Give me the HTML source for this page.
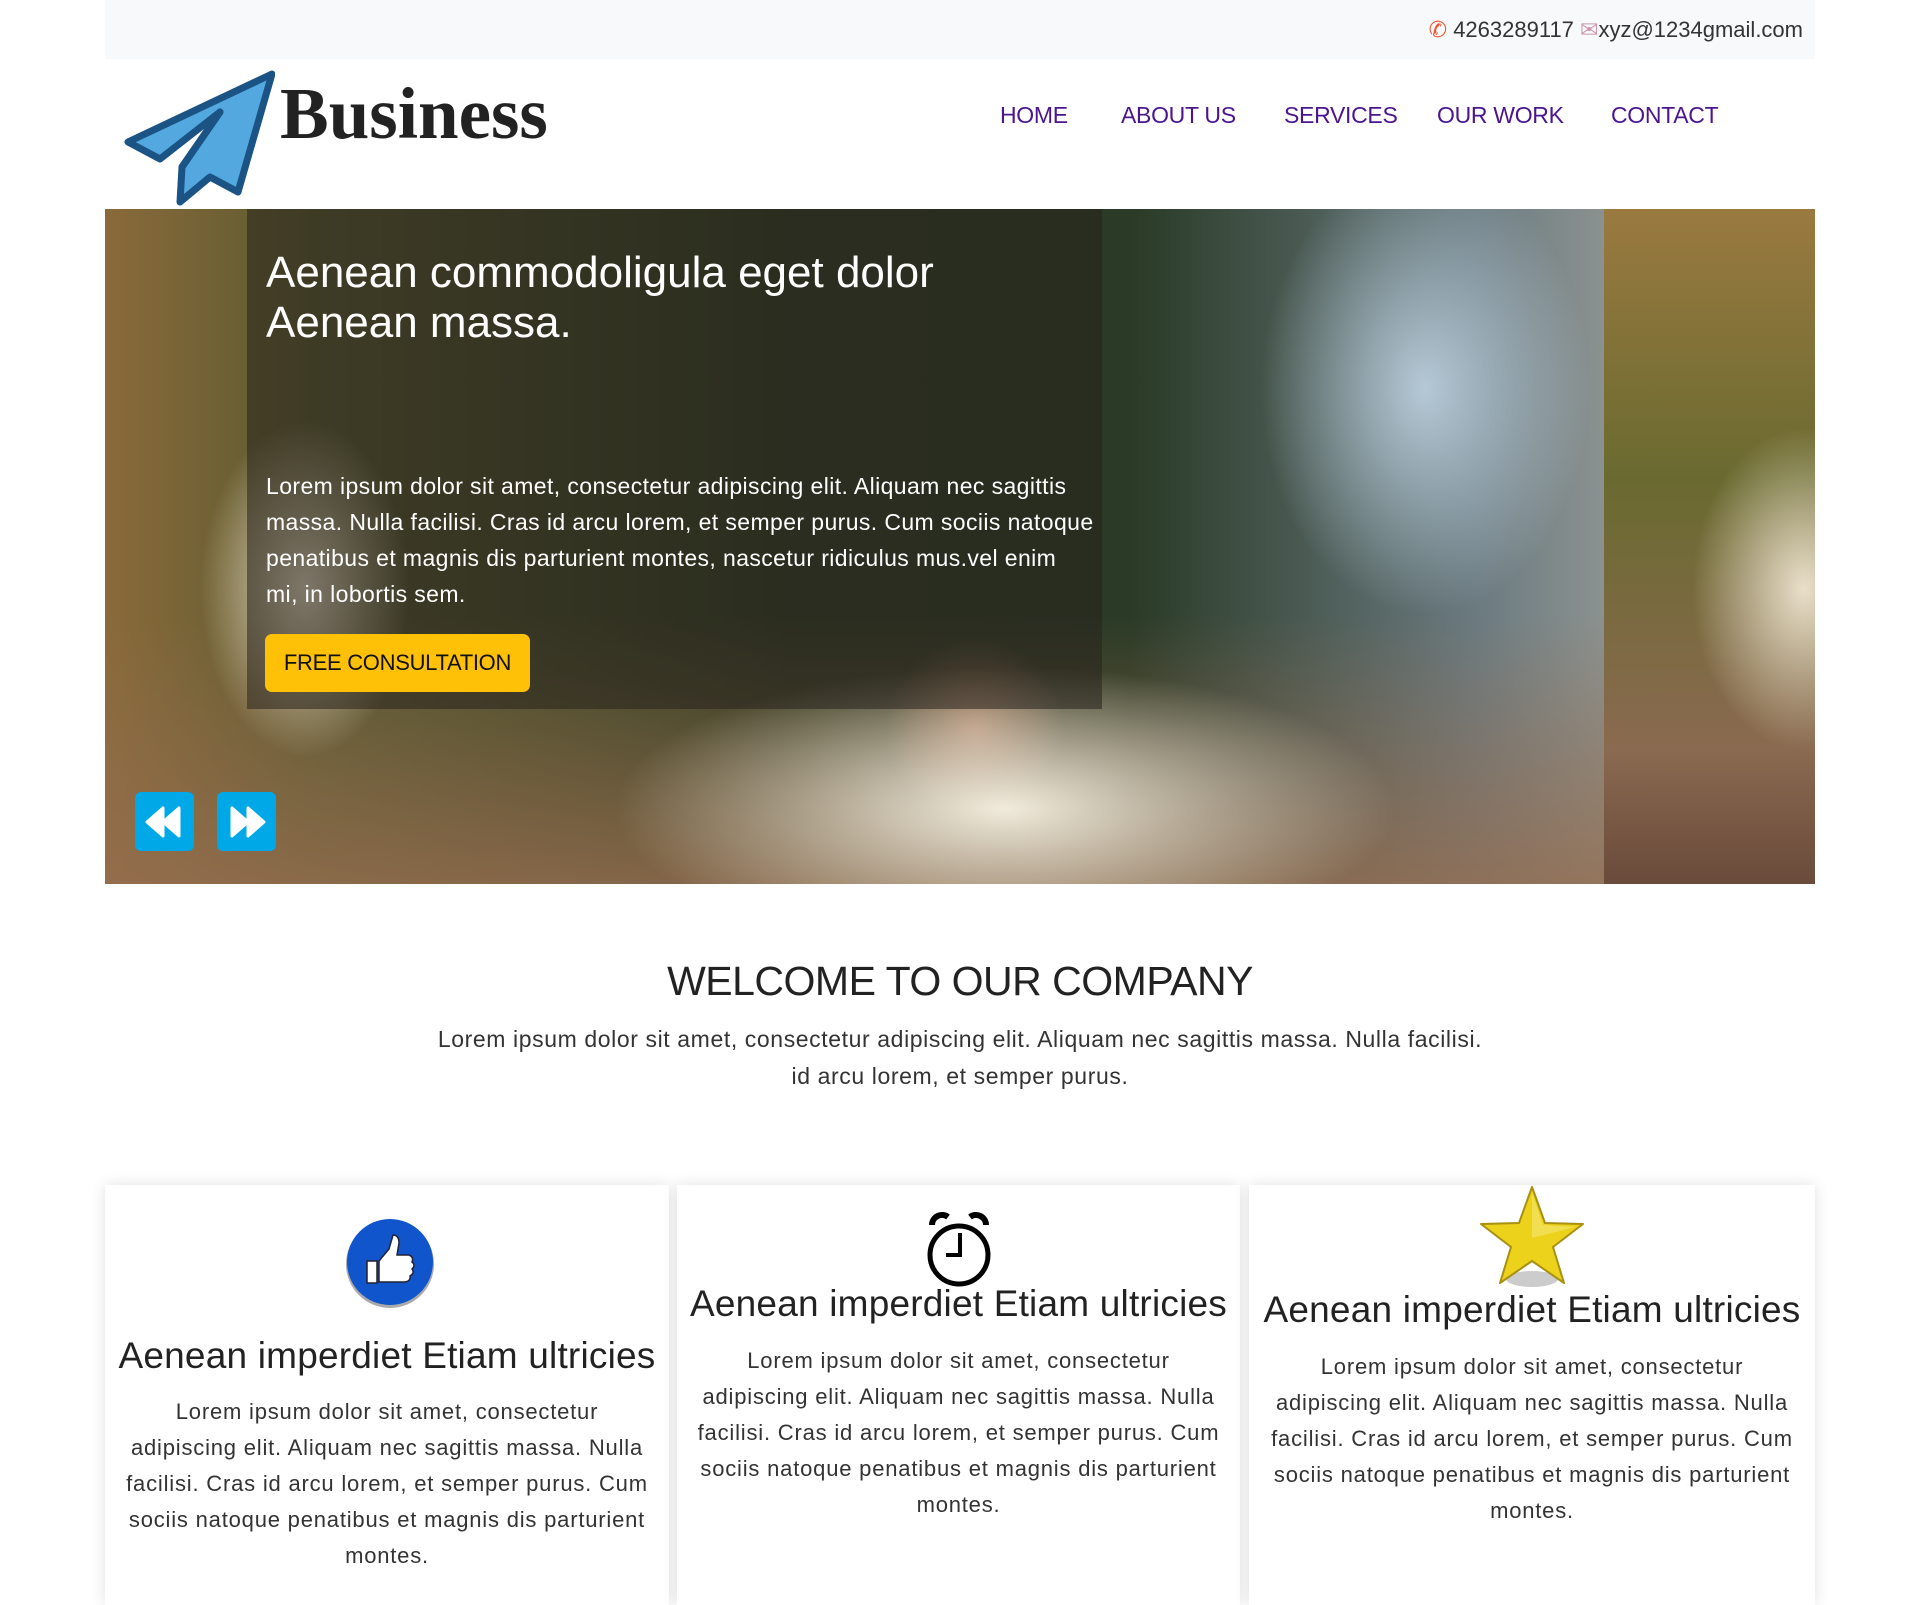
<!DOCTYPE html>
<html><head><meta charset="utf-8"><style>
*{margin:0;padding:0;box-sizing:border-box}
body{width:1920px;height:1597px;background:#fff;font-family:"Liberation Sans",sans-serif;position:relative;overflow:hidden;color:#212529}
.a{position:absolute}
.top{left:105px;top:0;width:1710px;height:59px;background:#f8f9fa}
.contact{right:117px;top:17px;font-size:22px;color:#333;white-space:nowrap;letter-spacing:0px}
.nav a{position:absolute;top:102px;font-size:23px;color:#4b1590;text-decoration:none;white-space:nowrap;letter-spacing:-0.3px}
.slider{left:105px;top:209px;width:1710px;height:675px;overflow:hidden;
background:
radial-gradient(ellipse 150px 240px at 200px 380px,rgba(240,228,205,.95),rgba(240,228,205,0) 70%),
radial-gradient(ellipse 520px 190px at 900px 600px,rgba(245,240,225,.97),rgba(245,240,225,0) 75%),
radial-gradient(ellipse 220px 300px at 1320px 180px,rgba(190,210,225,.9),rgba(190,210,225,0) 75%),
radial-gradient(ellipse 120px 120px at 870px 520px,rgba(220,150,120,.6),rgba(220,150,120,0) 75%),
linear-gradient(180deg,rgba(40,60,30,0) 0%,rgba(40,60,30,0) 60%,rgba(150,110,80,.8) 100%),
linear-gradient(90deg,#8a6a3a 0%,#5a5a30 12%,#2e3a22 40%,#2a3a26 60%,#6a7a80 80%,#c0b8a8 100%)}
.strip{left:1604px;top:209px;width:211px;height:675px;
background:radial-gradient(ellipse 160px 230px at 200px 380px,rgba(240,230,210,.95),rgba(240,230,210,0) 70%),linear-gradient(180deg,#9a7a40,#6a6a30 40%,#8a6a50 80%,#6a4a3a)}
.ov{left:247px;top:209px;width:855px;height:500px;background:rgba(40,35,30,.55)}
.h1{left:266px;top:248px;font-size:44px;line-height:50px;color:#fff;letter-spacing:0px}
.p1{left:266px;top:468px;width:840px;font-size:23px;line-height:36px;color:#fff;letter-spacing:0.4px}
.btn{left:265px;top:634px;width:265px;height:58px;background:#ffc107;border-radius:7px;font-size:22px;color:#111;text-align:center;line-height:58px;letter-spacing:-0.3px}
.arr{top:792px;width:59px;height:59px;background:#00a8e8;border-radius:6px}
.wh{left:0;width:1920px;top:958px;text-align:center;font-size:41px;color:#222;letter-spacing:-0.5px}
.wt{left:0;width:1920px;top:1021px;text-align:center;font-size:23px;line-height:37px;color:#333;letter-spacing:0.6px}
.card{top:1185px;height:420px;background:#fff;box-shadow:0 0 14px rgba(0,0,0,.12)}
.ch{width:100%;text-align:center;font-size:37px;color:#222;position:absolute;letter-spacing:0.2px;white-space:nowrap}
.ct{width:100%;text-align:center;font-size:22px;line-height:36px;color:#333;position:absolute;letter-spacing:0.8px;white-space:nowrap}
</style></head><body>
<div class="a top"></div>
<div class="a contact"><span style="color:#e53">&#9990;</span> 4263289117 <span style="color:#c9a">&#9993;</span>xyz@1234gmail.com</div>
<svg class="a" style="left:120px;top:62px" width="155" height="145" viewBox="0 0 155 145">
<path d="M8 80 L152 12 L118 130 L90 115 L60 140 L62 105 L100 50 L40 97 Z" fill="#52a8df" stroke="#1b5385" stroke-width="7" stroke-linejoin="round"/>
<path d="M100 50 L62 105" stroke="#1b5385" stroke-width="7" fill="none" stroke-linecap="round"/>
</svg>
<div class="a" style="left:280px;top:72px;font-family:'Liberation Serif',serif;font-weight:bold;font-size:73px;color:#222">Business</div>
<div class="nav">
<a style="left:1000px">HOME</a><a style="left:1121px">ABOUT US</a><a style="left:1284px">SERVICES</a><a style="left:1437px">OUR WORK</a><a style="left:1611px">CONTACT</a>
</div>
<div class="a slider"></div>
<div class="a strip"></div>
<div class="a ov"></div>
<div class="a h1">Aenean commodoligula eget dolor<br>Aenean massa.</div>
<div class="a p1">Lorem ipsum dolor sit amet, consectetur adipiscing elit. Aliquam nec sagittis<br>massa. Nulla facilisi. Cras id arcu lorem, et semper purus. Cum sociis natoque<br>penatibus et magnis dis parturient montes, nascetur ridiculus mus.vel enim<br>mi, in lobortis sem.</div>
<div class="a btn">FREE CONSULTATION</div>
<div class="a arr" style="left:135px"><svg width="59" height="59"><path d="M12 30 L28 16 L28 44Z M28 30 L44 16 L44 44Z" fill="#fff" stroke="#fff" stroke-width="3" stroke-linejoin="round"/></svg></div>
<div class="a arr" style="left:217px"><svg width="59" height="59"><path d="M47 30 L31 16 L31 44Z M31 30 L15 16 L15 44Z" fill="#fff" stroke="#fff" stroke-width="3" stroke-linejoin="round"/></svg></div>
<div class="a wh">WELCOME TO OUR COMPANY</div>
<div class="a wt">Lorem ipsum dolor sit amet, consectetur adipiscing elit. Aliquam nec sagittis massa. Nulla facilisi.<br>id arcu lorem, et semper purus.</div>

<div class="a card" style="left:105px;width:564px">
<svg class="a" style="left:240px;top:32px" width="92" height="94"><circle cx="45" cy="47" r="44" fill="#555" opacity=".5"/><circle cx="45" cy="45" r="43" fill="#1155cc"/><path d="M22 44 h10 v22 h-10z M34 44 l10-12 l4-14 q6 0 6 8 l-2 12 h12 q5 2 3 7 q4 3 0 7 q3 4-2 7 q1 5-5 6 h-26z" fill="#fff" stroke="#223" stroke-width="1.5"/></svg>
<div class="ch" style="top:150px">Aenean imperdiet Etiam ultricies</div>
<div class="ct" style="top:209px">Lorem ipsum dolor sit amet, consectetur<br>adipiscing elit. Aliquam nec sagittis massa. Nulla<br>facilisi. Cras id arcu lorem, et semper purus. Cum<br>sociis natoque penatibus et magnis dis parturient<br>montes.</div>
</div>
<div class="a card" style="left:677px;width:563px">
<svg class="a" style="left:245px;top:26px" width="74" height="78"><path d="M10 14 a10 10 0 0 1 16-8 M64 14 a10 10 0 0 0-16-8" stroke="#000" stroke-width="6" fill="none"/><circle cx="37" cy="44" r="29" fill="none" stroke="#000" stroke-width="5"/><path d="M24 44 h14 v-22" stroke="#000" stroke-width="4" fill="none"/></svg>
<div class="ch" style="top:98px">Aenean imperdiet Etiam ultricies</div>
<div class="ct" style="top:158px">Lorem ipsum dolor sit amet, consectetur<br>adipiscing elit. Aliquam nec sagittis massa. Nulla<br>facilisi. Cras id arcu lorem, et semper purus. Cum<br>sociis natoque penatibus et magnis dis parturient<br>montes.</div>
</div>
<div class="a card" style="left:1249px;width:566px">
<svg class="a" style="left:228px;top:-2px" width="110" height="108"><ellipse cx="55" cy="96" rx="26" ry="8" fill="#999" opacity=".5"/><path d="M55 4 L68 40 L106 41 L76 64 L87 100 L55 78 L23 100 L34 64 L4 41 L42 40Z" fill="#ecd21a" stroke="#a89010" stroke-width="2" stroke-linejoin="round"/><path d="M55 10 L66 42 L98 44 L55 55Z" fill="#f4e46a" opacity=".7"/></svg>
<div class="ch" style="top:104px">Aenean imperdiet Etiam ultricies</div>
<div class="ct" style="top:164px">Lorem ipsum dolor sit amet, consectetur<br>adipiscing elit. Aliquam nec sagittis massa. Nulla<br>facilisi. Cras id arcu lorem, et semper purus. Cum<br>sociis natoque penatibus et magnis dis parturient<br>montes.</div>
</div>
</body></html>
